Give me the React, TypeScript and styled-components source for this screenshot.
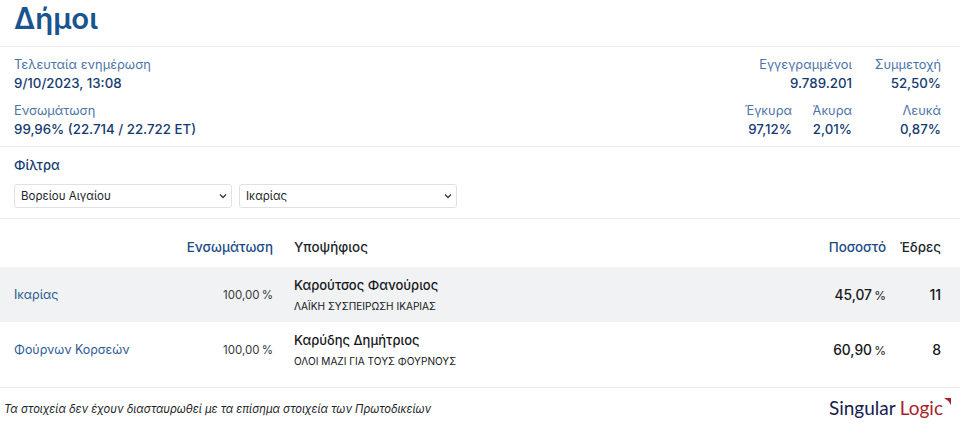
import React from "react";
import styled, { createGlobalStyle } from "styled-components";

const GlobalStyle = createGlobalStyle`
    html, body {
        margin: 0;
        padding: 0;
        background: #fff;
        font-family: Inter, "Liberation Sans", sans-serif;
    }
`;

const Page = styled.div`
    width: 960px;
    height: 429px;
    overflow: hidden;
    display: flex;
    flex-direction: column;
`;

const Title = styled.h1`
    margin: 0;
    height: 46px;
    padding-left: 14px;
    font-size: 29.4px;
    line-height: 38px;
    font-weight: 600;
    color: #1a5490;
    border-bottom: 1px solid #e9ecef;
`;

const Stats = styled.section`
    height: 100px;
    padding: 9px 19px 0 14px;
    box-sizing: border-box;
    display: flex;
    justify-content: space-between;
    border-bottom: 1px solid #e9ecef;
`;

const StatColumn = styled.div`
    display: flex;
    flex-direction: column;
    gap: 10px;
`;

const StatRow = styled.div`
    display: flex;
    justify-content: flex-end;
`;

const Stat = styled.div<{ $width?: number; $right?: boolean }>`
    width: ${(p) => (p.$width ? `${p.$width}px` : "auto")};
    text-align: ${(p) => (p.$right ? "right" : "left")};
`;

const StatLabel = styled.div`
    font-size: 12.8px;
    line-height: 18px;
    color: #4c74a6;
`;

const StatValue = styled.div`
    font-size: 13.3px;
    line-height: 18px;
    font-weight: 500;
    color: #163a70;
`;

const Filters = styled.section`
    height: 72px;
    padding: 9px 14px 0;
    box-sizing: border-box;
    border-bottom: 1px solid #e9ecef;
`;

const FilterTitle = styled.div`
    font-size: 13px;
    line-height: 18px;
    font-weight: 500;
    color: #163a70;
    margin-bottom: 10px;
`;

const FilterRow = styled.div`
    display: flex;
    gap: 7px;
`;

const Select = styled.select`
    appearance: none;
    width: 218px;
    height: 24px;
    padding: 0 6px;
    font-family: Inter, "Liberation Sans", sans-serif;
    font-size: 11.5px;
    color: #212529;
    background: #fff url("data:image/svg+xml,%3Csvg xmlns='http://www.w3.org/2000/svg' width='8' height='6'%3E%3Cpath d='M1 1.5l3 3 3-3' fill='none' stroke='%23343a40' stroke-width='1.3'/%3E%3C/svg%3E") no-repeat right 4px center;
    border: 1px solid #dee2e6;
    border-radius: 3px;
`;

const columns = "grid-template-columns: 273px 1fr 100px 55px; column-gap: 0; padding-right: 19px;";

const TableHead = styled.div`
    display: grid;
    ${columns}
    height: 48px;
    box-sizing: border-box;
    padding-top: 8px;
    align-items: center;
    font-size: 13.4px;
    font-weight: 500;
`;

const TableRow = styled.div<{ $shaded?: boolean }>`
    display: grid;
    ${columns}
    height: 55px;
    align-items: center;
    background: ${(p) => (p.$shaded ? "#f0f2f4" : "#fff")};
`;

const HeadCell = styled.div<{ $link?: boolean; $right?: boolean }>`
    color: ${(p) => (p.$link ? "#1b4a86" : "#212529")};
    text-align: ${(p) => (p.$right ? "right" : "left")};
`;

const FirstCell = styled.div`
    display: flex;
    justify-content: space-between;
    padding-left: 14px;
    align-items: center;
`;

const AreaLink = styled.a`
    font-size: 12.4px;
    color: #2c5a94;
`;

const Percent = styled.span`
    font-size: 11.5px;
    word-spacing: -1px;
    color: #343a40;
`;

const Candidate = styled.div`
    padding-left: 21px;
`;

const CandidateName = styled.div`
    font-size: 13px;
    line-height: 18px;
    font-weight: 500;
    color: #16181b;
    margin-bottom: 5px;
`;

const Party = styled.div`
    font-size: 10.1px;
    line-height: 14px;
    color: #16181b;
`;

const Share = styled.div`
    text-align: right;
    font-size: 13.8px;
    font-weight: 500;
    word-spacing: -1.5px;
    color: #16181b;
`;

const ShareSign = styled.span`
    font-size: 12px;
    font-weight: 400;
`;

const Seats = styled.div`
    text-align: right;
    font-size: 14px;
    font-weight: 500;
    color: #16181b;
`;

const Footer = styled.footer`
    margin-top: 10px;
    flex: 1;
    border-top: 1px solid #e9ecef;
    padding: 0 9px 0 4px;
    display: flex;
    justify-content: space-between;
    align-items: center;
`;

const Note = styled.span`
    font-size: 11.2px;
    font-style: italic;
    color: #212529;
`;

const Logo = styled.div`
    display: flex;
    align-items: flex-start;
    margin-bottom: 2px;
    font-family: Lato, "Liberation Sans", sans-serif;
    font-size: 19px;
    line-height: 24px;
`;

const LogoDark = styled.span`
    color: #15204f;
    margin-right: 4px;
`;

const LogoRed = styled.span`
    color: #a81f2d;
`;

const LogoMark = styled.svg`
    width: 7px;
    height: 7px;
    margin-top: 2px;
    margin-left: 1px;
`;

const results = [
    { area: "Ικαρίας", name: "Καρούτσος Φανούριος", party: "ΛΑΪΚΗ ΣΥΣΠΕΙΡΩΣΗ ΙΚΑΡΙΑΣ", share: "45,07", seats: "11", shaded: true },
    { area: "Φούρνων Κορσεών", name: "Καρύδης Δημήτριος", party: "ΟΛΟΙ ΜΑΖΙ ΓΙΑ ΤΟΥΣ ΦΟΥΡΝΟΥΣ", share: "60,90", seats: "8", shaded: false },
];

export default function App(): JSX.Element {
    return (
        <Page>
            <GlobalStyle />
            <Title>Δήμοι</Title>
            <Stats>
                <StatColumn>
                    <Stat>
                        <StatLabel>Τελευταία ενημέρωση</StatLabel>
                        <StatValue>9/10/2023, 13:08</StatValue>
                    </Stat>
                    <Stat>
                        <StatLabel>Ενσωμάτωση</StatLabel>
                        <StatValue>99,96% (22.714 / 22.722 ΕΤ)</StatValue>
                    </Stat>
                </StatColumn>
                <StatColumn>
                    <StatRow>
                        <Stat $right>
                            <StatLabel>Εγγεγραμμένοι</StatLabel>
                            <StatValue>9.789.201</StatValue>
                        </Stat>
                        <Stat $right $width={89}>
                            <StatLabel>Συμμετοχή</StatLabel>
                            <StatValue>52,50%</StatValue>
                        </Stat>
                    </StatRow>
                    <StatRow>
                        <Stat $right>
                            <StatLabel>Έγκυρα</StatLabel>
                            <StatValue>97,12%</StatValue>
                        </Stat>
                        <Stat $right $width={60}>
                            <StatLabel>Άκυρα</StatLabel>
                            <StatValue>2,01%</StatValue>
                        </Stat>
                        <Stat $right $width={89}>
                            <StatLabel>Λευκά</StatLabel>
                            <StatValue>0,87%</StatValue>
                        </Stat>
                    </StatRow>
                </StatColumn>
            </Stats>
            <Filters>
                <FilterTitle>Φίλτρα</FilterTitle>
                <FilterRow>
                    <Select defaultValue="north">
                        <option value="north">Βορείου Αιγαίου</option>
                    </Select>
                    <Select defaultValue="ikaria">
                        <option value="ikaria">Ικαρίας</option>
                    </Select>
                </FilterRow>
            </Filters>
            <TableHead>
                <HeadCell $link $right>Ενσωμάτωση</HeadCell>
                <Candidate>
                    <HeadCell>Υποψήφιος</HeadCell>
                </Candidate>
                <HeadCell $link $right>Ποσοστό</HeadCell>
                <HeadCell $right>Έδρες</HeadCell>
            </TableHead>
            {results.map((row) => (
                <TableRow key={row.area} $shaded={row.shaded}>
                    <FirstCell>
                        <AreaLink>{row.area}</AreaLink>
                        <Percent>100,00 %</Percent>
                    </FirstCell>
                    <Candidate>
                        <CandidateName>{row.name}</CandidateName>
                        <Party>{row.party}</Party>
                    </Candidate>
                    <Share>
                        {row.share} <ShareSign>%</ShareSign>
                    </Share>
                    <Seats>{row.seats}</Seats>
                </TableRow>
            ))}
            <Footer>
                <Note>Τα στοιχεία δεν έχουν διασταυρωθεί με τα επίσημα στοιχεία των Πρωτοδικείων</Note>
                <Logo>
                    <LogoDark>Singular</LogoDark>
                    <LogoRed>Logic</LogoRed>
                    <LogoMark viewBox="0 0 8 8">
                        <path d="M0 0h8v8L5 3.5z" fill="#a81f2d" />
                    </LogoMark>
                </Logo>
            </Footer>
        </Page>
    );
}
